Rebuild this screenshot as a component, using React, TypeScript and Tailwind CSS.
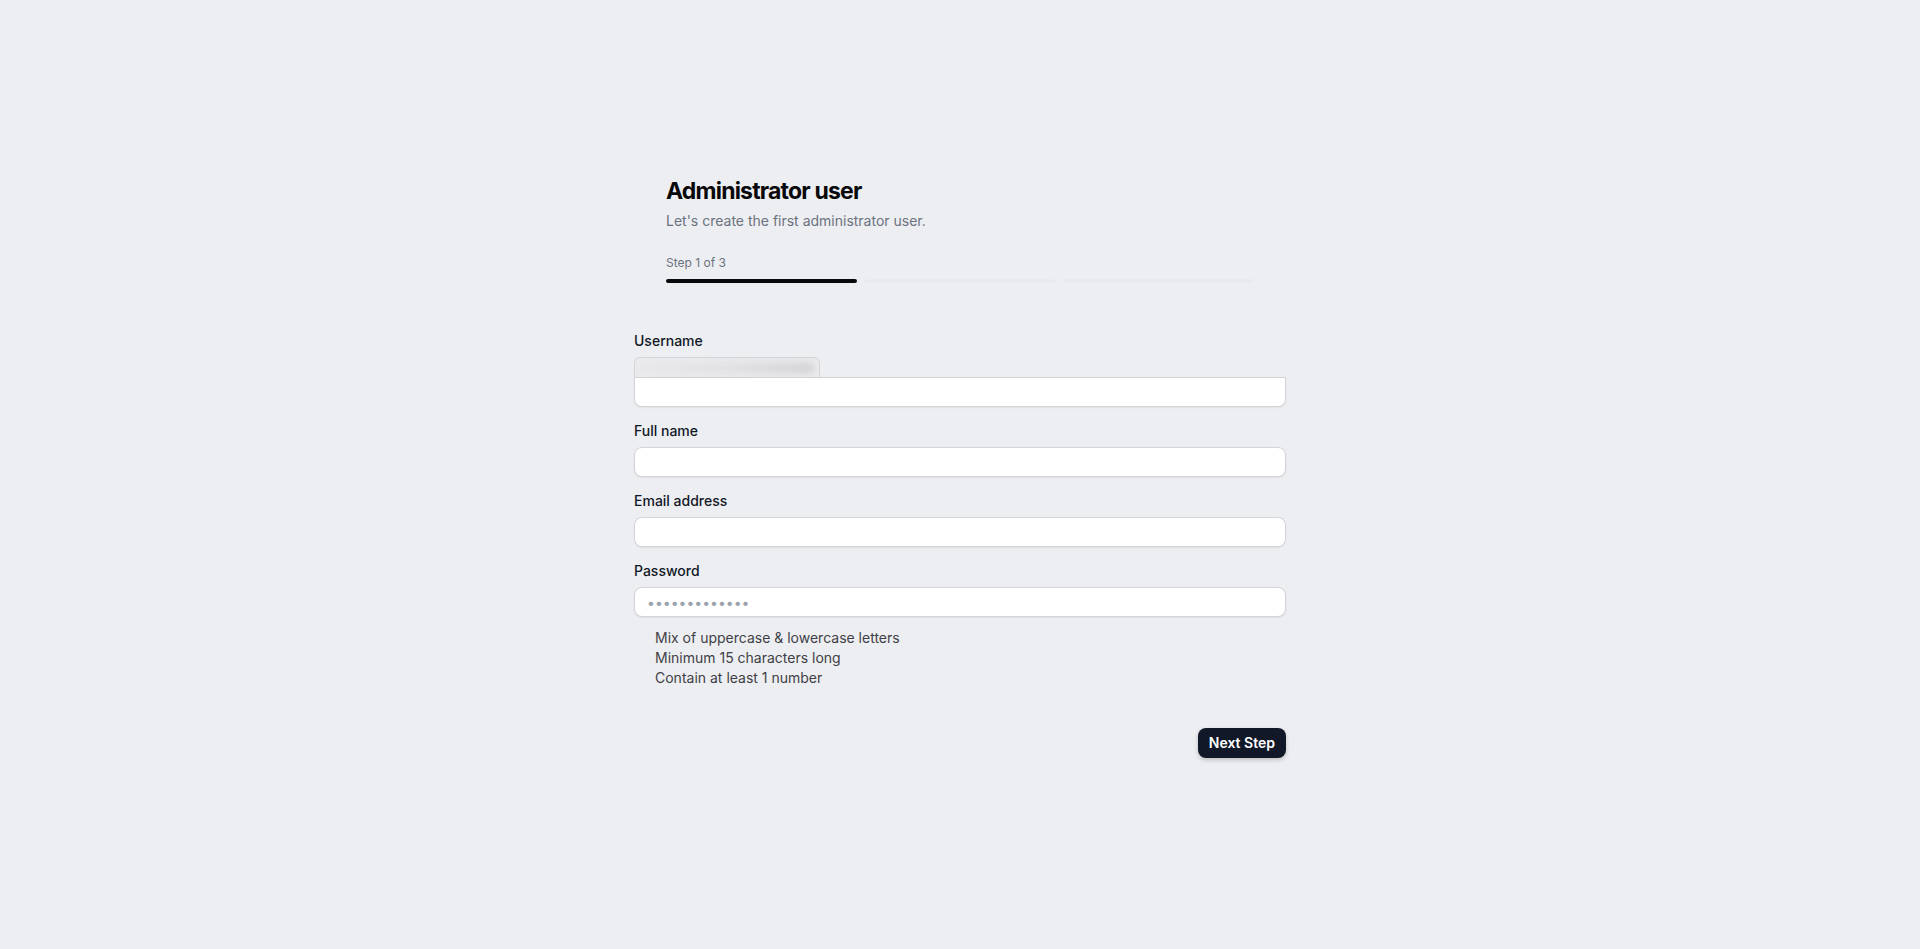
const fields = [
    { label: "Full name", type: "text", placeholder: "" },
    { label: "Email address", type: "email", placeholder: "" },
    { label: "Password", type: "password", placeholder: "•••••••••••••" },
];

const hints = [
    "Mix of uppercase & lowercase letters",
    "Minimum 15 characters long",
    "Contain at least 1 number",
];

const inputClass =
    "w-full h-[30px] px-3 bg-white border border-[#d4d4d8] rounded-lg shadow-[0_1px_2px_rgba(0,0,0,0.06)] text-sm text-gray-900 placeholder:text-[#9ca3af] focus:outline-none";

const App = () => {
    return (
        <div className="min-h-screen bg-[#edeef1] flex justify-center font-['Inter',sans-serif]">
            <div className="w-[652px] pt-[175px]">
                {/* header */}
                <div className="px-8">
                    <h1 className="text-[23px] leading-8 font-bold tracking-[-0.035em] text-[#09090b]">
                        Administrator user
                    </h1>
                    <p className="mt-1 text-sm leading-5 text-[#6b7280]">
                        Let's create the first administrator user.
                    </p>
                    <div className="mt-6 text-xs leading-4 text-[#6b7280]">Step 1 of 3</div>
                    <div className="mt-2 flex gap-2">
                        <div className="flex-1 h-1 rounded-sm bg-[#09090b]" />
                        <div className="flex-1 h-1 rounded-sm bg-[#e9eaee]" />
                        <div className="flex-1 h-1 rounded-sm bg-[#e9eaee]" />
                    </div>
                </div>

                <form className="mt-[46px] flex flex-col gap-3" onSubmit={(e) => e.preventDefault()}>
                    <div>
                        <label className="block text-sm leading-6 font-medium text-[#111827] mb-1">
                            Username
                        </label>
                        <div className="w-[186px] h-5 border border-b-0 border-[#d4d4d8] rounded-t-md bg-[#ebebee] overflow-hidden flex items-center px-1">
                            <div className="h-3 w-full rounded-full bg-gradient-to-r from-[#e8e8eb] via-[#e2e2e5] to-[#d4d4d7] blur-[3px]" />
                        </div>
                        <input type="text" className={inputClass + " rounded-t-none"} />
                    </div>

                    {fields.map((f) => (
                        <div key={f.label}>
                            <label className="block text-sm leading-6 font-medium text-[#111827] mb-1">
                                {f.label}
                            </label>
                            <input type={f.type} placeholder={f.placeholder} className={inputClass} />
                        </div>
                    ))}
                </form>

                <ul className="mt-[11px] pl-[21px] text-sm leading-5 text-[#3f3f46]">
                    {hints.map((h) => (
                        <li key={h}>{h}</li>
                    ))}
                </ul>

                <div className="mt-10 flex justify-end">
                    <button
                        type="button"
                        className="h-[30px] px-[11px] rounded-lg bg-[#111827] text-white text-sm font-semibold shadow-[0_2px_4px_rgba(0,0,0,0.2)]"
                    >
                        Next Step
                    </button>
                </div>
            </div>
        </div>
    );
};

export default App;
